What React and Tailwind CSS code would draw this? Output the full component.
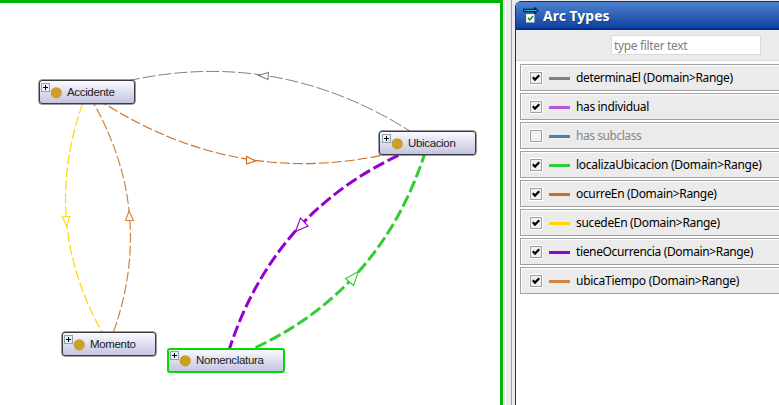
const nodes = [
  { label: 'Accidente', box: 'left-[39px] top-[80px] w-[96px] h-[24px] border border-[#3c3c3c] shadow-[0_0_0_0.5px_#3c3c3c] pl-px pt-px' },
  { label: 'Ubicacion', box: 'left-[379px] top-[131px] w-[97px] h-[24px] border border-[#3c3c3c] shadow-[0_0_0_0.5px_#3c3c3c] pl-[2px] pt-px' },
  { label: 'Momento', box: 'left-[62px] top-[332px] w-[94px] h-[24px] border border-[#3c3c3c] shadow-[0_0_0_0.5px_#3c3c3c] pl-px pt-px' },
  { label: 'Nomenclatura', box: 'left-[167px] top-[348px] w-[118px] h-[25px] border-2 border-[#00dc00] pl-px' },
];

const edges = [
  { d: 'M428 143Q270 33 87 92', color: '#808080', width: 1, dash: '13 3', head: '258.5,75.5 268.5,72.5 268,79.5' },
  { d: 'M87 92Q245 202 428 143', color: '#d2691e', width: 1.1, dash: '10 3', head: '255.5,161 246.5,156.5 246.5,164' },
  { d: 'M87 92Q35 223.5 109 344', color: '#ffd700', width: 1.2, dash: '10 3', head: '66.5,226 62.3,217 70,216.3' },
  { d: 'M109 344Q161 212.5 87 92', color: '#cd853f', width: 1.2, dash: '10 3', head: '129,211 125.7,220.5 133.5,220.5' },
  { d: 'M428 143Q272.8 201 226 360', color: '#9400d3', width: 3, dash: '12 4', head: '295.5,231.5 300.5,218 308,226' },
  { d: 'M226 360Q381 302 428 143', color: '#32cd32', width: 3, dash: '12 4', head: '358.5,271.5 345.5,278.5 353.5,285.5' },
];

const arcs = [
  { label: 'determinaEl (Domain>Range)', color: 'bg-[#808080]', text: 'text-black tracking-[-0.35px]', checked: true },
  { label: 'has individual', color: 'bg-[#ba55d3]', text: 'text-black tracking-[-0.35px]', checked: true },
  { label: 'has subclass', color: 'bg-[#4682b4]', text: 'text-[#868686] tracking-[-0.45px]', checked: false },
  { label: 'localizaUbicacion (Domain>Range)', color: 'bg-[#32cd32]', text: 'text-black tracking-[-0.27px]', checked: true },
  { label: 'ocurreEn (Domain>Range)', color: 'bg-[#d2691e]', text: 'text-black tracking-[-0.34px]', checked: true },
  { label: 'sucedeEn (Domain>Range)', color: 'bg-[#ffd700]', text: 'text-black tracking-[-0.33px]', checked: true },
  { label: 'tieneOcurrencia (Domain>Range)', color: 'bg-[#9400d3]', text: 'text-black tracking-[-0.36px]', checked: true },
  { label: 'ubicaTiempo (Domain>Range)', color: 'bg-[#cd853f]', text: 'text-black tracking-[-0.27px]', checked: true },
];

function Node({ label, box }) {
  return (
    <div className={`absolute flex items-start rounded-[3px] bg-linear-to-b from-[#fafaff] to-[#c4c4e2] ${box}`}>
      <svg className="mt-px shrink-0" width="9" height="9" shapeRendering="crispEdges">
        <rect x="0.5" y="0.5" width="8" height="8" fill="#e8f0f4" stroke="#8ba5b5" />
        <path d="M2 4.5h5M4.5 2v5" stroke="#000" />
      </svg>
      <svg className="mt-[5px] shrink-0" width="12" height="12">
        <circle cx="6.2" cy="5.8" r="5.6" fill="#cc9f2a" />
      </svg>
      <span className="ml-[5px] mt-[3px] font-['Liberation_Sans',sans-serif] text-[11.5px] leading-[14px] tracking-[-0.34px] text-[#202020]">{label}</span>
    </div>
  );
}

function Graph() {
  return (
    <div className="relative h-full w-[503px] shrink-0 overflow-hidden border-r-3 border-t-3 border-[#00b400] bg-white">
      <div className="absolute -top-[3px] left-0 h-[405px] w-[500px]">
        <svg className="absolute inset-0" width="500" height="405" fill="none">
          {edges.map((e) => (
            <g key={e.d} stroke={e.color}>
              <path d={e.d} strokeWidth={e.width} strokeDasharray={e.dash} />
              <polygon points={e.head} fill="#fff" strokeWidth="1.1" />
            </g>
          ))}
        </svg>
        {nodes.map((n) => (
          <Node key={n.label} {...n} />
        ))}
      </div>
    </div>
  );
}

function ArcRow({ label, color, text, checked }) {
  return (
    <div className="flex h-[27px] shrink-0 items-center border border-r-0 border-[#a0a0a0] bg-[#ebebeb] pl-2 pt-px shadow-[inset_1px_1px_0_#fff]">
      <span className="flex h-[14px] w-[14px] items-center justify-center border border-white">
        <span className="flex h-3 w-3 items-center justify-center border border-[#a0a0a0] bg-[#f0f0f0]">
          {checked && (
            <svg className="shrink-0" width="8" height="8" fill="none">
              <path d="M0.8 3.2L3 5.6L7.3 1.2" stroke="#000" strokeWidth="2.2" />
            </svg>
          )}
        </span>
      </span>
      <span className={`ml-[6px] mt-px h-[3px] w-[21px] ${color}`} />
      <span className={`ml-[6px] whitespace-nowrap text-[12px] leading-4 ${text}`}>{label}</span>
    </div>
  );
}

function ArcTypes() {
  return (
    <div className="mt-px flex min-w-0 flex-1 flex-col overflow-hidden rounded-tl-[6px] border-l border-[#0a2c9c] bg-white">
      <div className="flex h-[29px] shrink-0 items-start border-b-2 border-t border-b-[#032c96] border-t-[#0a2c7c] bg-linear-to-b from-[#4f83d0] to-[#10409f] pl-[7px]">
        <svg className="mt-1 shrink-0" width="18" height="18" fill="none">
          <path d="M0 4.5H12" stroke="#0a1a30" strokeWidth="3.4" />
          <path d="M11 1L15.2 4.5L11 8" fill="#0a1a30" stroke="#0a1a30" />
          <path d="M1 4.5H14" stroke="#20b8f0" strokeWidth="1.2" />
          <rect x="3.5" y="8.5" width="7.5" height="7.5" fill="#fff" stroke="#e4ece0" />
          <path d="M5 11.8L6.8 14L10 10" stroke="#15901c" strokeWidth="1.5" />
        </svg>
        <span className="ml-[2px] mt-1 text-[14px] font-bold leading-5 text-white [text-shadow:1px_1px_0_#1b3c80]">Arc Types</span>
      </div>
      <div className="flex h-[31px] shrink-0 items-start border-b border-[#d9d9d9] bg-[#ebebeb] pl-[95px] pt-[5px]">
        <div className="flex h-5 w-[150px] items-center border border-[#dadada] bg-white pl-[2px] pt-px text-[12px] leading-4 tracking-[-0.35px] text-[#808080]">type filter text</div>
      </div>
      <div className="flex flex-1 flex-col gap-[2px] pl-1 pt-[3px]">
        {arcs.map((a) => (
          <ArcRow key={a.label} {...a} />
        ))}
      </div>
    </div>
  );
}

export default function App() {
  return (
    <div className="flex h-[405px] w-[779px] overflow-hidden bg-[#ebebeb] font-['Noto_Sans',sans-serif]">
      <Graph />
      <div className="mr-[3px] flex w-[9px] shrink-0 border-r border-[#a0a0a0]">
        <span className="ml-px w-[2px] border-r border-white bg-[#dcdcdc]" />
      </div>
      <ArcTypes />
    </div>
  );
}
